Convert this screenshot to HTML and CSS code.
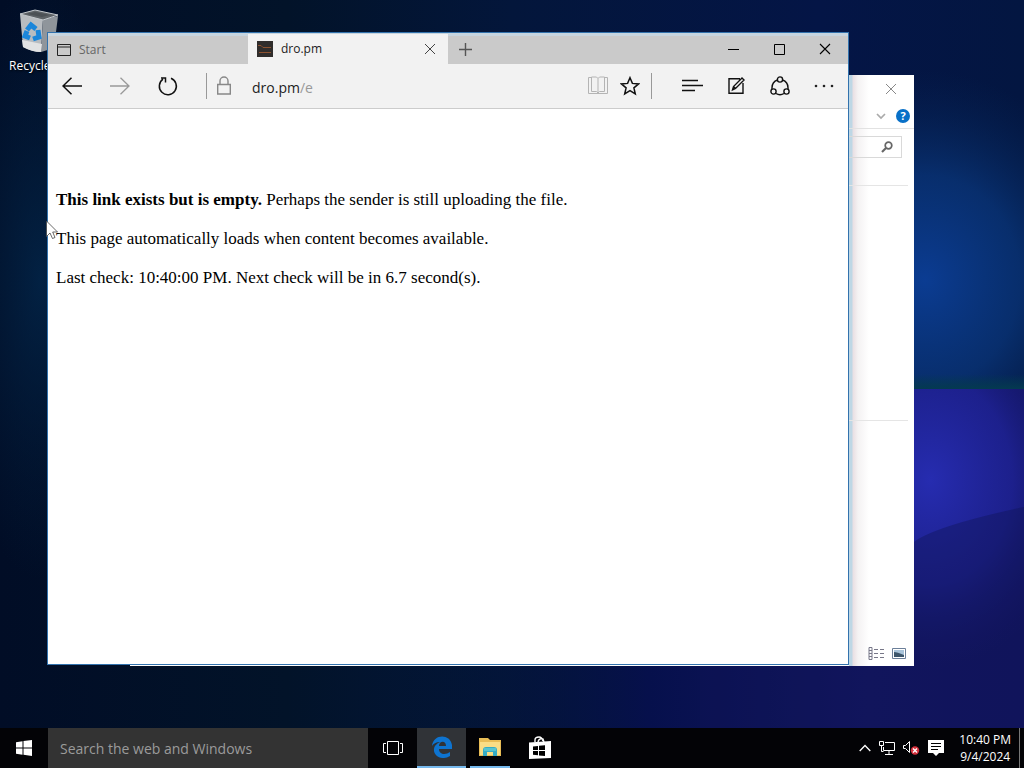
FILE: index.html
```html
<!DOCTYPE html>
<html lang="en">
<head>
<meta charset="utf-8">
<title>Desktop</title>
<link rel="stylesheet" href="styles.css">
</head>
<body>
<main class="desktop">
  <svg class="wallpaper" viewBox="0 0 1024 728" preserveAspectRatio="none" aria-hidden="true">
    <defs>
      <linearGradient id="base" x1="0" y1="0" x2="1" y2="0">
        <stop offset="0" stop-color="#010d26"/><stop offset=".28" stop-color="#021329"/><stop offset=".5" stop-color="#03163b"/><stop offset=".8" stop-color="#041546"/><stop offset="1" stop-color="#031641"/>
      </linearGradient>
      <radialGradient id="side"><stop offset="0" stop-color="#03264a" stop-opacity=".8"/><stop offset="1" stop-color="#03203f" stop-opacity="0"/></radialGradient>
      <radialGradient id="glow"><stop offset="0" stop-color="#0b3c92"/><stop offset=".5" stop-color="#093477" stop-opacity=".8"/><stop offset="1" stop-color="#062655" stop-opacity="0"/></radialGradient>
      <radialGradient id="violet"><stop offset="0" stop-color="#262cb0"/><stop offset=".55" stop-color="#20249b" stop-opacity=".75"/><stop offset="1" stop-color="#161a70" stop-opacity="0"/></radialGradient>
      <linearGradient id="lower" x1="0" y1="0" x2="1" y2="0"><stop offset="0" stop-color="#02152a" stop-opacity="0"/><stop offset=".4" stop-color="#06104c"/><stop offset=".75" stop-color="#131662"/><stop offset="1" stop-color="#121460"/></linearGradient>
      <linearGradient id="green" x1="0" y1="0" x2="0" y2="1"><stop offset="0" stop-color="#043a4f" stop-opacity="0"/><stop offset="1" stop-color="#043a50"/></linearGradient>
      <clipPath id="horizon"><path d="M0 389H1024V728H0Z"/></clipPath>
    </defs>
    <rect width="1024" height="728" fill="url(#base)"/>
    <ellipse cx="40" cy="280" rx="90" ry="300" fill="url(#side)"/>
    <ellipse cx="925" cy="280" rx="190" ry="210" fill="url(#glow)"/>
    <path d="M400 389H1024V728H400Z" fill="url(#lower)"/>
    <g clip-path="url(#horizon)"><ellipse cx="930" cy="480" rx="150" ry="190" fill="url(#violet)"/></g>
    <path d="M914 542Q935 526 1024 507V728H700V620Z" fill="#101354" opacity=".4"/>
    <path d="M800 374H1024V389H800Z" fill="url(#green)"/>
  </svg>

  <div class="shortcut">
    <svg width="40" height="44" viewBox="0 0 40 44" aria-hidden="true">
      <path d="M1 5 24 10 22 43Q13 43 4 38Z" fill="#b8bcc0"/>
      <path d="M24 10 39 7 35 39 22 43Z" fill="#8f959b"/>
      <path d="M3 31 23 35 22 43Q13 43 4 38Z" fill="#e1e2e3"/>
      <path d="M1 5 16 1 39 6 24 11Z" fill="#5d6266" stroke="#c4c9cd"/>
      <path d="m8 5 8-2 15 3-8 2Z" fill="#4c5155"/>
      <g fill="none" stroke="#1b86da" stroke-width="5"><path d="m8 21 4-5 5 4M19 21l1 7-6 2M11 29l-5-2 2-5"/></g>
    </svg>
    <span>Recycle Bin</span>
  </div>

  <section class="explorer" aria-label="File Explorer">
    <div class="explorer-title"><button class="plain" aria-label="Close Explorer"><svg width="12" height="12" viewBox="0 0 12 12"><path d="m1 1 10 10M11 1 1 11" stroke="#888" fill="none"/></svg></button></div>
    <div class="explorer-ribbon">
      <button class="plain" aria-label="Expand ribbon"><svg width="10" height="8" viewBox="0 0 10 8"><path d="m1 2 4 4 4-4" stroke="#aaa" stroke-width="1.7" fill="none"/></svg></button>
      <button class="help" aria-label="Help">?</button>
    </div>
    <div class="explorer-search"><input type="text" aria-label="Search files"><svg width="12" height="12" viewBox="0 0 12 12" aria-hidden="true"><circle cx="7.500" cy="4.500" r="3.300" stroke="#666" stroke-width="1.700" fill="none"/><path d="M5 7 1 11" stroke="#666" stroke-width="2.200"/></svg></div>
    <div class="explorer-head"></div>
    <div class="explorer-list"></div>
    <div class="explorer-status">
      <button class="plain" aria-label="Details view"><svg width="18" height="13" viewBox="0 0 18 13"><path d="M1 .5h3v12H1zM1 3.500h3M1 6.500h3M1 9.500h3" fill="none" stroke="#778"/><path d="M6 2.500h4m2 0h4M6 6.500h4m2 0h4M6 10.500h4m2 0h4" stroke="#778"/></svg></button>
      <button class="plain" aria-label="Large icons"><svg width="14" height="11" viewBox="0 0 14 11"><path d="M.5.5h13v10H.5z" fill="#fff" stroke="#6b7f99"/><path d="M2 2h10v7H2z" fill="#a9c4da"/><path d="M2 4q3 0 10 3v2H2z" fill="#3d566b"/></svg></button>
    </div>
  </section>

  <section class="browser" aria-label="dro.pm">
    <header class="tabs">
      <button class="tab"><svg width="14" height="12" viewBox="0 0 14 12"><path d="M.5.5h13v11H.5zM0 3h14" fill="none" stroke="#222"/></svg><span>Start</span></button>
      <div class="tab active">
        <svg width="16" height="16" viewBox="0 0 16 16" aria-hidden="true"><path fill="#302d2c" d="M0 0h16v16H0z"/><path d="M1 4.500h3l2 2h8M2 11.500h12" stroke="#8d5230" fill="none"/></svg>
        <span>dro.pm</span>
        <button class="plain tab-close" aria-label="Close tab"><svg width="12" height="12" viewBox="0 0 12 12"><path d="m1 1 10 10M11 1 1 11" stroke="#444" fill="none"/></svg></button>
      </div>
      <button class="plain new-tab" aria-label="New tab"><svg width="13" height="13" viewBox="0 0 13 13"><path d="M6.500 0v13M0 6.500h13" stroke="#555" stroke-width="1.400"/></svg></button>
      <div class="window-buttons">
        <button class="plain" aria-label="Minimize"><svg width="11" height="11" viewBox="0 0 11 11"><path d="M0 5.500h11" stroke="#000"/></svg></button>
        <button class="plain" aria-label="Maximize"><svg width="11" height="11" viewBox="0 0 11 11"><path d="M.5.5h10v10H.5z" stroke="#000" fill="none"/></svg></button>
        <button class="plain" aria-label="Close"><svg width="12" height="12" viewBox="0 0 12 12"><path d="m1 1 10 10M11 1 1 11" stroke="#000" stroke-width="1.100"/></svg></button>
      </div>
    </header>
    <div class="toolbar">
      <button class="plain nav" aria-label="Back"><svg width="20" height="18" viewBox="0 0 20 18"><path d="M20 9H1M9.500.7 1 9l8.500 8.300" fill="none" stroke="#111" stroke-width="1.500"/></svg></button>
      <button class="plain nav" aria-label="Forward"><svg width="20" height="18" viewBox="0 0 20 18"><path d="M0 9h19M10.500.7 19 9l-8.500 8.300" fill="none" stroke="#999" stroke-width="1.300"/></svg></button>
      <button class="plain nav" aria-label="Refresh"><svg width="20" height="20" viewBox="0 0 20 20"><path d="M13 2.300A8.500 8.500 0 1 1 5 3.200M3 2h4.500v4.500" fill="none" stroke="#111" stroke-width="1.500"/></svg></button>
      <div class="address">
        <svg width="14" height="19" viewBox="0 0 14 19" aria-hidden="true"><path d="M.7 8.500h12.600v9.500H.7zM3 8.500V5a4 4 0 0 1 8 0v3.500" fill="none" stroke="#888" stroke-width="1.400"/></svg>
        <a class="url" href="#page">dro.pm<span>/e</span></a>
        <button class="plain" aria-label="Reading view"><svg width="20" height="19" viewBox="0 0 20 19"><path d="M3 1.500H.5v16h19v-16H17M3.500 1v14.500h5l1.500 1.500 1.500-1.500h5V1h-5L10 2.500 8.500 1zM10 2.500v14" fill="none" stroke="#b4b4b4"/></svg></button>
        <button class="plain star" aria-label="Favorites"><svg width="20" height="20" viewBox="0 0 20 20"><path d="m10 1.700 2.400 5.700 6.200.5-4.700 4 1.400 6.100-5.300-3.300L4.700 18l1.400-6.100-4.700-4 6.200-.5z" fill="none" stroke="#111" stroke-width="1.500"/></svg></button>
      </div>
      <div class="actions">
        <button class="plain" aria-label="Hub"><svg width="21" height="14" viewBox="0 0 21 14"><path d="M0 1.500h16M0 6.500h21M0 11.500h13" stroke="#111" stroke-width="1.400"/></svg></button>
        <button class="plain" aria-label="Make a note"><svg width="17" height="18" viewBox="0 0 17 18"><path d="M12 1.700H1v14.600h14V6M4.500 13l1-3.500L14 1l2 2-8.500 8.500zM5.500 9.500l2 2" fill="none" stroke="#111" stroke-width="1.400"/></svg></button>
        <button class="plain" aria-label="Share"><svg width="20" height="20" viewBox="0 0 20 20"><g fill="none" stroke="#111" stroke-width="1.400"><circle cx="10" cy="3.500" r="2.600"/><circle cx="3.500" cy="15.500" r="2.600"/><circle cx="16.500" cy="15.500" r="2.600"/><path d="M7.500 4Q1.500 6 2 13M12.500 4Q18.500 6 18 13M6 17.500Q10 20 14 17.500"/></g></svg></button>
        <button class="plain" aria-label="More"><svg width="20" height="4" viewBox="0 0 20 4"><g fill="#222"><circle cx="2" cy="2" r="1.300"/><circle cx="10" cy="2" r="1.300"/><circle cx="18" cy="2" r="1.300"/></g></svg></button>
      </div>
    </div>
    <article class="page" id="page">
      <p><b>This link exists but is empty.</b> Perhaps the sender is still uploading the file.</p>
      <p>This page automatically loads when content becomes available.</p>
      <p>Last check: 10:40:00 PM. Next check will be in 6.7 second(s).</p>
    </article>
  </section>
  <svg class="cursor" width="13" height="20" viewBox="0 0 13 20" aria-hidden="true"><path d="M.5 1v15.500l3.500-3.500 2.500 5.500 2.500-1L6.700 12H11.500z" fill="#fff" stroke="#444" stroke-width=".8"/></svg>
</main>

<footer class="taskbar">
  <button class="plain start" aria-label="Start menu"><svg width="16" height="16" viewBox="0 0 16 16"><path d="M0 2.200 6.500 1.200V7.500H0zM7.500 1.100 16 0v7.500H7.500zM0 8.500h6.500v6.300L0 13.800zM7.500 8.500H16V16l-8.500-1.200z" fill="#fff"/></svg></button>
  <input class="search" type="text" aria-label="Search the web and Windows" placeholder="Search the web and Windows">
  <button class="plain task" aria-label="Task view"><svg width="20" height="14" viewBox="0 0 20 14"><path d="M4.500.5h11v13h-11zM3 2.500H.5v9H3M17 2.500h2.500v9H17" fill="none" stroke="#fff"/></svg></button>
  <button class="plain task running focused" aria-label="Edge"><svg width="22" height="22" viewBox="0 0 22 22"><path d="M1 10C2-2 19-3 21 9v4H8c0 6 7 6 11 3v4C11 25 2 20 3 13c.5-4 4-6 6-7C5 6 2 8 1 10zm7 0h7c0-6-7-5-7 0z" fill="#0e74d0"/></svg></button>
  <button class="plain task running background" aria-label="File Explorer"><svg width="22" height="20" viewBox="0 0 22 20"><path d="M0 1h9l2 2h11v16H0z" fill="#e8bd56"/><path d="M1 5h20v13H1z" fill="#f9dd85"/><path d="M4 19v-6q0-3 3-3h8q3 0 3 3v6h-4v-4H8v4z" fill="#35acc5"/><path d="M5 11h12v3H5z" fill="#55c4cf"/></svg></button>
  <button class="plain task" aria-label="Store"><svg width="22" height="24" viewBox="0 0 22 24"><path d="M6 6V4q0-3 4-3 3 0 4 4M9 6q1-4 5-3l1 3" fill="none" stroke="#fff" stroke-width="1.400"/><path d="M0 6.500 22 5v17L0 23z" fill="#fff"/><path d="M4 10.500 9 10v4H4zM10 9.800l6-.6V14h-6zM4 15h5v4.200l-5-.5zM10 15h6v5l-6-.6z" fill="#000"/></svg></button>
  <div class="tray">
    <button class="plain" aria-label="Show hidden icons"><svg width="12" height="8" viewBox="0 0 12 8"><path d="m.7 7 5.300-5.500L11.300 7" fill="none" stroke="#fff" stroke-width="1.300"/></svg></button>
    <button class="plain" aria-label="Network"><svg width="16" height="14" viewBox="0 0 16 14"><path d="M6 1.500h9.500v8H4.500V6M10 9.500v4M6 13.500h8M.5.500h4v4h-4zM2.500 4.500v6h2" fill="none" stroke="#fff"/></svg></button>
    <button class="plain" aria-label="Volume"><svg width="17" height="14" viewBox="0 0 17 14"><path d="M.5 4.500h2l4-4v11l-4-4h-2z" fill="none" stroke="#fff"/><circle cx="12" cy="9.500" r="4.200" fill="#d5303c"/><path d="m10 7.500 4 4m0-4-4 4" stroke="#fff" stroke-width="1.400"/></svg></button>
    <button class="plain" aria-label="Notifications"><svg width="16" height="16" viewBox="0 0 16 16"><path d="M0 0h16v13h-5l-3 3-3-3H0z" fill="#fff"/><path d="M3 3.500h10M3 6.500h10M3 9.500h7" stroke="#000"/></svg></button>
    <button class="plain clock"><span>10:40 PM</span><span>9/4/2024</span></button>
    <button class="plain peek" aria-label="Show desktop"></button>
  </div>
</footer>
</body>
</html>
```

FILE: styles.css
```css
* { box-sizing: border-box; }

body {
  margin: 0;
  height: 100vh;
  display: flex;
  flex-direction: column;
  overflow: hidden;
  background: #000;
  font: 12px/16px "Open Sans", "Noto Sans", sans-serif;
}

svg { display: block; flex: none; }

.plain {
  display: flex;
  align-items: center;
  justify-content: center;
  padding: 0;
  border: 0;
  background: none;
  font: inherit;
  color: inherit;
}

.desktop { position: relative; flex: 1; min-height: 0; overflow: hidden; }
.wallpaper { position: absolute; inset: 0; width: 100%; height: 100%; }

.shortcut {
  position: absolute;
  left: 9px;
  top: 9px;
  display: flex;
  flex-direction: column;
  gap: 5px;
  color: #fff;
  white-space: nowrap;
  text-shadow: 1px 1px 2px #000;
}
.shortcut svg { margin-left: 10px; }

.explorer {
  position: absolute;
  inset: 75px 110px 62px 130px;
  display: flex;
  flex-direction: column;
  background: linear-gradient(90deg, #bed7e5 0 3px, #e9dfe3 4px, #f4f2f3 9px, #fff 20px) right / 65px 100% no-repeat #fff;
}
.explorer-title { display: flex; justify-content: flex-end; align-items: center; height: 28px; padding-right: 17px; }
.explorer-ribbon { display: flex; justify-content: flex-end; align-items: center; gap: 10px; height: 26px; padding-right: 4px; border-bottom: 1px solid #e2e2e2; }
.help { width: 14px; height: 14px; padding: 0; border: 0; border-radius: 50%; background: #0870c8; color: #fff; font: bold 11px/14px "Open Sans", sans-serif; }
.explorer-search { display: flex; align-items: center; height: 22px; margin: 7px 12px 0 8px; padding-right: 8px; border: 1px solid #d9d9d9; }
.explorer-search input { flex: 1; min-width: 0; border: 0; background: none; }
.explorer-head { height: 28px; margin-right: 6px; border-bottom: 1px solid #e5e5e5; }
.explorer-list { height: 235px; margin-right: 6px; border-bottom: 1px solid #e5e5e5; }
.explorer-status { display: flex; justify-content: flex-end; gap: 6px; margin-top: auto; padding: 0 8px 6px; }

.browser {
  position: absolute;
  inset: 32px 175px 63px 47px;
  display: flex;
  flex-direction: column;
  border: 1px solid #3272ad;
  background: #fff;
}
.tabs { display: flex; height: 31px; background: #cacaca; border-top: 3px solid #c7d5df; }
.tab { display: flex; align-items: center; width: 200px; padding: 0 9px; gap: 8px; border: 0; background: none; color: #666; font: 12px/16px "Open Sans", sans-serif; }
.tab.active { margin-top: -2px; background: #f2f2f2; color: #222; }
.tab-close { margin-left: auto; width: 18px; height: 20px; }
.new-tab { width: 34px; padding-bottom: 2px; }
.window-buttons { display: flex; margin-left: auto; padding-bottom: 2px; }
.window-buttons .plain { width: 46px; }

.toolbar { display: flex; align-items: center; height: 45px; padding-bottom: 1px; background: #f2f2f2; border-bottom: 1px solid #ccc; }
.nav { width: 48px; height: 40px; }
.address { display: flex; align-items: center; flex: 1; height: 26px; margin-left: 14px; padding: 0 11px 0 10px; border: solid #999; border-width: 0 1px; }
.url { flex: 1; margin-left: 21px; padding-top: 4px; color: #222; font-size: 14px; line-height: 20px; text-decoration: none; }
.url span { color: #999; }
.star { margin-left: 12px; }
.actions { display: flex; margin-left: 18px; padding-right: 2px; }
.actions .plain { width: 44px; height: 36px; }

.page { padding: 81px 8px 0; font: 17px/19px "Liberation Serif", serif; color: #000; }
.page p { margin: 0 0 20px; }

.cursor { position: absolute; left: 46px; top: 220px; }

.taskbar { display: flex; height: 40px; background: #030306; color: #fff; }
.start { width: 48px; }
.search { width: 320px; min-width: 0; padding: 2px 12px 0; border: 0; border-radius: 0; background: #333; color: #fff; font: 14px/20px "Open Sans", sans-serif; }
.search::placeholder { color: #9b9b9b; opacity: 1; }
.task { width: 49px; }
.running { border-bottom: 2px solid #76b9ed; }
.focused { background-color: #303337; }
.background { width: 40px; margin: 0 5px 0 4px; }
.tray { display: flex; align-items: center; gap: 8px; margin-left: auto; }
.clock { flex-direction: column; align-items: center; margin-left: 7px; font-size: 12px; line-height: 17px; }
.peek { align-self: stretch; width: 5px; border-left: 1px solid #777; }
```
